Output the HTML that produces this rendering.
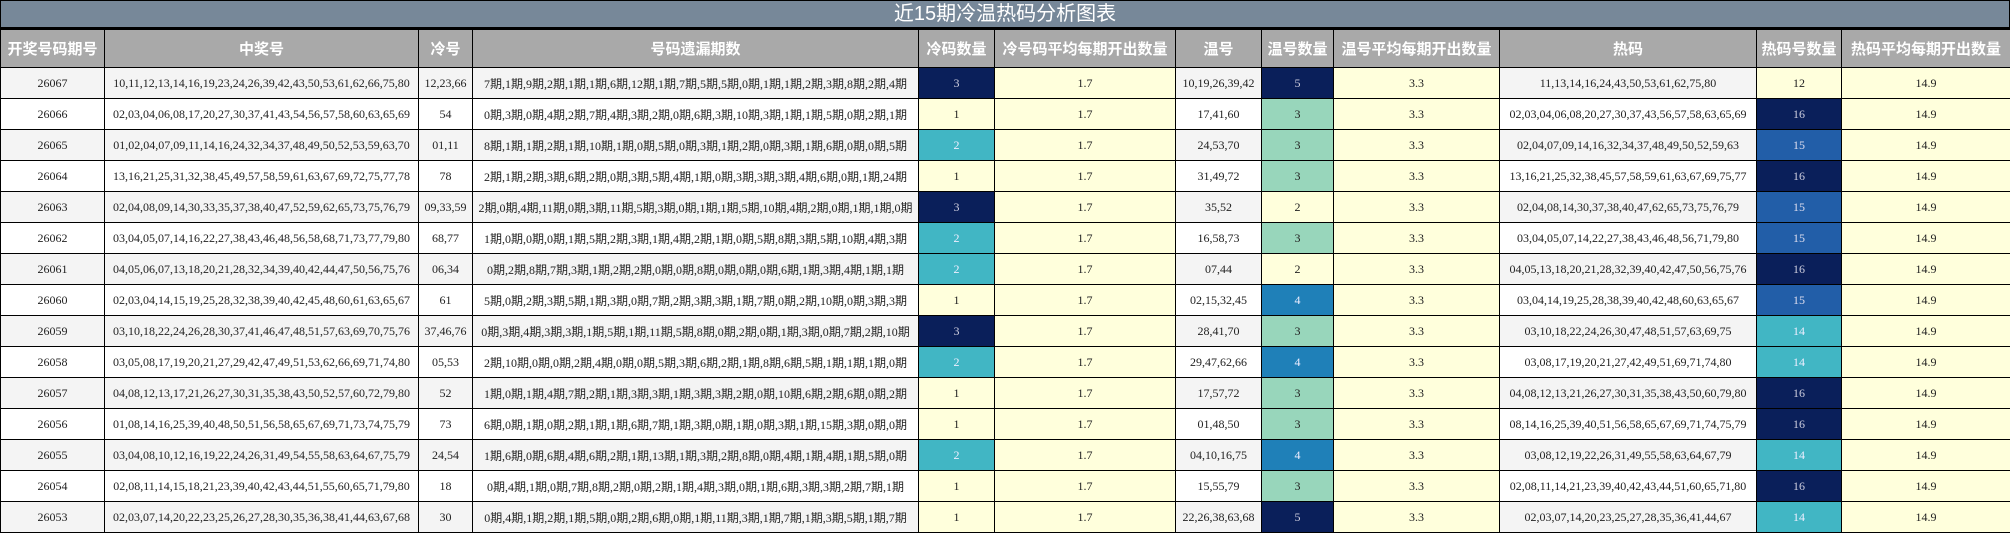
<!DOCTYPE html>
<html><head><meta charset="utf-8">
<style>
html,body{margin:0;padding:0;background:#fff;}
body{width:2010px;height:532px;overflow:hidden;}
.title{height:26px;background:#778899;color:#fff;font-family:"Liberation Sans","Noto Sans CJK SC",sans-serif;font-size:20px;line-height:26px;text-align:center;border:1px solid #000;border-bottom:2px solid #000;box-sizing:content-box;width:2008px;}
table{border-collapse:collapse;table-layout:fixed;width:2010px;}
th{background:#a9a9a9;color:#fff;font-family:"Liberation Sans","Noto Sans CJK SC",sans-serif;font-weight:bold;font-size:15px;height:37px;border:1px solid #000;padding:0;white-space:nowrap;overflow:hidden;}
td{font-family:"Liberation Serif","Noto Sans CJK SC",serif;font-size:12px;color:#222;height:30px;border:1px solid #000;text-align:center;padding:0;white-space:nowrap;overflow:hidden;}
tr.g td{background:#f4f4f4;}
tr.w td{background:#fff;}
tr td.y{background:#ffffdc;}
tr td.n{background:#0a1f5a;color:#ccd;}
tr td.t{background:#41b6c4;color:#eef;}
tr td.m{background:#225ea8;color:#dde;}
tr td.b{background:#1f80b8;color:#eef;}
tr td.c{background:#98d6bb;}
</style></head><body>
<div class="title">近15期冷温热码分析图表</div>
<table>
<colgroup>
<col style="width:104px"><col style="width:314px"><col style="width:54px"><col style="width:446px"><col style="width:76px"><col style="width:181px"><col style="width:86px"><col style="width:72px"><col style="width:166px"><col style="width:257px"><col style="width:85px"><col style="width:169px">
</colgroup>
<tr><th>开奖号码期号</th><th>中奖号</th><th>冷号</th><th>号码遗漏期数</th><th>冷码数量</th><th>冷号码平均每期开出数量</th><th>温号</th><th>温号数量</th><th>温号平均每期开出数量</th><th>热码</th><th>热码号数量</th><th>热码平均每期开出数量</th></tr>
<tr class="g"><td>26067</td><td>10,11,12,13,14,16,19,23,24,26,39,42,43,50,53,61,62,66,75,80</td><td>12,23,66</td><td>7期,1期,9期,2期,1期,1期,6期,12期,1期,7期,5期,5期,0期,1期,1期,2期,3期,8期,2期,4期</td><td class="n">3</td><td class="y">1.7</td><td>10,19,26,39,42</td><td class="n">5</td><td class="y">3.3</td><td>11,13,14,16,24,43,50,53,61,62,75,80</td><td class="y">12</td><td class="y">14.9</td></tr>
<tr class="w"><td>26066</td><td>02,03,04,06,08,17,20,27,30,37,41,43,54,56,57,58,60,63,65,69</td><td>54</td><td>0期,3期,0期,4期,2期,7期,4期,3期,2期,0期,6期,3期,10期,3期,1期,1期,5期,0期,2期,1期</td><td class="y">1</td><td class="y">1.7</td><td>17,41,60</td><td class="c">3</td><td class="y">3.3</td><td>02,03,04,06,08,20,27,30,37,43,56,57,58,63,65,69</td><td class="n">16</td><td class="y">14.9</td></tr>
<tr class="g"><td>26065</td><td>01,02,04,07,09,11,14,16,24,32,34,37,48,49,50,52,53,59,63,70</td><td>01,11</td><td>8期,1期,1期,2期,1期,10期,1期,0期,5期,0期,3期,1期,2期,0期,3期,1期,6期,0期,0期,5期</td><td class="t">2</td><td class="y">1.7</td><td>24,53,70</td><td class="c">3</td><td class="y">3.3</td><td>02,04,07,09,14,16,32,34,37,48,49,50,52,59,63</td><td class="m">15</td><td class="y">14.9</td></tr>
<tr class="w"><td>26064</td><td>13,16,21,25,31,32,38,45,49,57,58,59,61,63,67,69,72,75,77,78</td><td>78</td><td>2期,1期,2期,3期,6期,2期,0期,3期,5期,4期,1期,0期,3期,3期,3期,4期,6期,0期,1期,24期</td><td class="y">1</td><td class="y">1.7</td><td>31,49,72</td><td class="c">3</td><td class="y">3.3</td><td>13,16,21,25,32,38,45,57,58,59,61,63,67,69,75,77</td><td class="n">16</td><td class="y">14.9</td></tr>
<tr class="g"><td>26063</td><td>02,04,08,09,14,30,33,35,37,38,40,47,52,59,62,65,73,75,76,79</td><td>09,33,59</td><td>2期,0期,4期,11期,0期,3期,11期,5期,3期,0期,1期,1期,5期,10期,4期,2期,0期,1期,1期,0期</td><td class="n">3</td><td class="y">1.7</td><td>35,52</td><td class="y">2</td><td class="y">3.3</td><td>02,04,08,14,30,37,38,40,47,62,65,73,75,76,79</td><td class="m">15</td><td class="y">14.9</td></tr>
<tr class="w"><td>26062</td><td>03,04,05,07,14,16,22,27,38,43,46,48,56,58,68,71,73,77,79,80</td><td>68,77</td><td>1期,0期,0期,0期,1期,5期,2期,3期,1期,4期,2期,1期,0期,5期,8期,3期,5期,10期,4期,3期</td><td class="t">2</td><td class="y">1.7</td><td>16,58,73</td><td class="c">3</td><td class="y">3.3</td><td>03,04,05,07,14,22,27,38,43,46,48,56,71,79,80</td><td class="m">15</td><td class="y">14.9</td></tr>
<tr class="g"><td>26061</td><td>04,05,06,07,13,18,20,21,28,32,34,39,40,42,44,47,50,56,75,76</td><td>06,34</td><td>0期,2期,8期,7期,3期,1期,2期,2期,0期,0期,8期,0期,0期,0期,6期,1期,3期,4期,1期,1期</td><td class="t">2</td><td class="y">1.7</td><td>07,44</td><td class="y">2</td><td class="y">3.3</td><td>04,05,13,18,20,21,28,32,39,40,42,47,50,56,75,76</td><td class="n">16</td><td class="y">14.9</td></tr>
<tr class="w"><td>26060</td><td>02,03,04,14,15,19,25,28,32,38,39,40,42,45,48,60,61,63,65,67</td><td>61</td><td>5期,0期,2期,3期,5期,1期,3期,0期,7期,2期,3期,3期,1期,7期,0期,2期,10期,0期,3期,3期</td><td class="y">1</td><td class="y">1.7</td><td>02,15,32,45</td><td class="b">4</td><td class="y">3.3</td><td>03,04,14,19,25,28,38,39,40,42,48,60,63,65,67</td><td class="m">15</td><td class="y">14.9</td></tr>
<tr class="g"><td>26059</td><td>03,10,18,22,24,26,28,30,37,41,46,47,48,51,57,63,69,70,75,76</td><td>37,46,76</td><td>0期,3期,4期,3期,3期,1期,5期,1期,11期,5期,8期,0期,2期,0期,1期,3期,0期,7期,2期,10期</td><td class="n">3</td><td class="y">1.7</td><td>28,41,70</td><td class="c">3</td><td class="y">3.3</td><td>03,10,18,22,24,26,30,47,48,51,57,63,69,75</td><td class="t">14</td><td class="y">14.9</td></tr>
<tr class="w"><td>26058</td><td>03,05,08,17,19,20,21,27,29,42,47,49,51,53,62,66,69,71,74,80</td><td>05,53</td><td>2期,10期,0期,0期,2期,4期,0期,0期,5期,3期,6期,2期,1期,8期,6期,5期,1期,1期,1期,0期</td><td class="t">2</td><td class="y">1.7</td><td>29,47,62,66</td><td class="b">4</td><td class="y">3.3</td><td>03,08,17,19,20,21,27,42,49,51,69,71,74,80</td><td class="t">14</td><td class="y">14.9</td></tr>
<tr class="g"><td>26057</td><td>04,08,12,13,17,21,26,27,30,31,35,38,43,50,52,57,60,72,79,80</td><td>52</td><td>1期,0期,1期,4期,7期,2期,1期,3期,3期,1期,3期,3期,2期,0期,10期,6期,2期,6期,0期,2期</td><td class="y">1</td><td class="y">1.7</td><td>17,57,72</td><td class="c">3</td><td class="y">3.3</td><td>04,08,12,13,21,26,27,30,31,35,38,43,50,60,79,80</td><td class="n">16</td><td class="y">14.9</td></tr>
<tr class="w"><td>26056</td><td>01,08,14,16,25,39,40,48,50,51,56,58,65,67,69,71,73,74,75,79</td><td>73</td><td>6期,0期,1期,0期,2期,1期,1期,6期,7期,1期,3期,0期,1期,0期,3期,1期,15期,3期,0期,0期</td><td class="y">1</td><td class="y">1.7</td><td>01,48,50</td><td class="c">3</td><td class="y">3.3</td><td>08,14,16,25,39,40,51,56,58,65,67,69,71,74,75,79</td><td class="n">16</td><td class="y">14.9</td></tr>
<tr class="g"><td>26055</td><td>03,04,08,10,12,16,19,22,24,26,31,49,54,55,58,63,64,67,75,79</td><td>24,54</td><td>1期,6期,0期,6期,4期,6期,2期,1期,13期,1期,3期,2期,8期,0期,4期,1期,4期,1期,5期,0期</td><td class="t">2</td><td class="y">1.7</td><td>04,10,16,75</td><td class="b">4</td><td class="y">3.3</td><td>03,08,12,19,22,26,31,49,55,58,63,64,67,79</td><td class="t">14</td><td class="y">14.9</td></tr>
<tr class="w"><td>26054</td><td>02,08,11,14,15,18,21,23,39,40,42,43,44,51,55,60,65,71,79,80</td><td>18</td><td>0期,4期,1期,0期,7期,8期,2期,0期,2期,1期,4期,3期,0期,1期,6期,3期,3期,2期,7期,1期</td><td class="y">1</td><td class="y">1.7</td><td>15,55,79</td><td class="c">3</td><td class="y">3.3</td><td>02,08,11,14,21,23,39,40,42,43,44,51,60,65,71,80</td><td class="n">16</td><td class="y">14.9</td></tr>
<tr class="g"><td>26053</td><td>02,03,07,14,20,22,23,25,26,27,28,30,35,36,38,41,44,63,67,68</td><td>30</td><td>0期,4期,1期,2期,1期,5期,0期,2期,6期,0期,1期,11期,3期,1期,7期,1期,3期,5期,1期,7期</td><td class="y">1</td><td class="y">1.7</td><td>22,26,38,63,68</td><td class="n">5</td><td class="y">3.3</td><td>02,03,07,14,20,23,25,27,28,35,36,41,44,67</td><td class="t">14</td><td class="y">14.9</td></tr>
</table>
</body></html>
